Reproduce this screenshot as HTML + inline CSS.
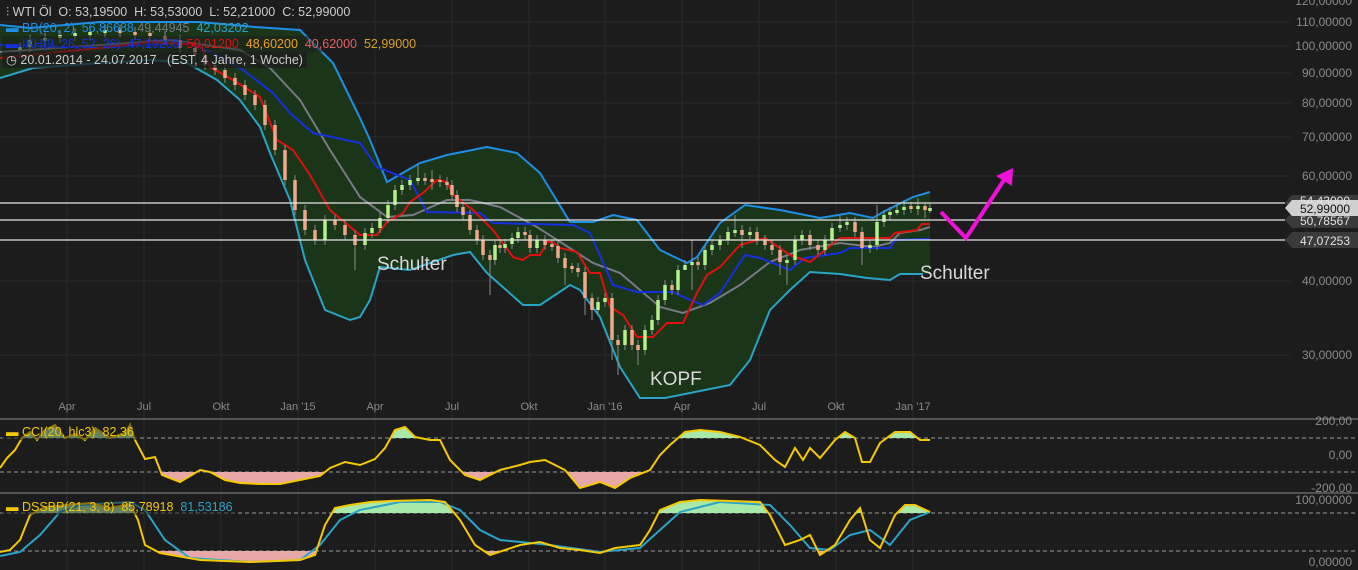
<!DOCTYPE html><html><head><meta charset="utf-8"><style>
html,body{margin:0;padding:0;background:#1c1c1c;width:1358px;height:570px;overflow:hidden;font-family:"Liberation Sans",sans-serif}
svg{position:absolute;left:0;top:0}
.lg{position:absolute;font-size:12.5px;white-space:nowrap;background:rgba(28,28,28,.75);padding:0 4px;line-height:16px}
</style></head><body>
<svg width="1358" height="570" xmlns="http://www.w3.org/2000/svg" font-family="Liberation Sans, sans-serif">
<defs>
<clipPath id="cgA"><rect x="0" y="419" width="1290" height="19"/></clipPath>
<clipPath id="cgB"><rect x="0" y="472" width="1290" height="21"/></clipPath>
<clipPath id="dgA"><rect x="0" y="494" width="1290" height="19"/></clipPath>
<clipPath id="dgB"><rect x="0" y="551" width="1290" height="19"/></clipPath>
</defs>
<g stroke="#2a2a2a" stroke-width="1">
<line x1="67" y1="0" x2="67" y2="570"/><line x1="144" y1="0" x2="144" y2="570"/><line x1="221" y1="0" x2="221" y2="570"/><line x1="298" y1="0" x2="298" y2="570"/><line x1="375" y1="0" x2="375" y2="570"/><line x1="452" y1="0" x2="452" y2="570"/><line x1="529" y1="0" x2="529" y2="570"/><line x1="605" y1="0" x2="605" y2="570"/><line x1="682" y1="0" x2="682" y2="570"/><line x1="759" y1="0" x2="759" y2="570"/><line x1="836" y1="0" x2="836" y2="570"/><line x1="913" y1="0" x2="913" y2="570"/>
<line x1="0" y1="22" x2="1290" y2="22"/><line x1="0" y1="46" x2="1290" y2="46"/><line x1="0" y1="73" x2="1290" y2="73"/><line x1="0" y1="103" x2="1290" y2="103"/><line x1="0" y1="137" x2="1290" y2="137"/><line x1="0" y1="176" x2="1290" y2="176"/><line x1="0" y1="281" x2="1290" y2="281"/><line x1="0" y1="355" x2="1290" y2="355"/>
</g>
<polygon fill="#1b3519" points="0,25 30,28 100,22 200,22 255,27 300,30 333,63 360,118 370,140 387,182 420,163 447,155 487,147 517,153 540,173 570,222 593,222 613,215 637,220 660,250 687,263 697,257 720,223 745,205 780,210 820,218 850,213 873,218 883,212 913,197 930,192 930,274 923,274 900,274 890,280 867,278 840,274 810,272 790,290 770,310 750,360 730,385 695,392 665,398 655,398 640,398 620,367 600,317 580,290 570,285 540,305 523,305 487,273 470,252 453,255 410,270 380,267 370,300 360,317 350,320 325,310 305,260 290,200 270,153 260,127 240,100 217,80 187,63 150,60 100,63 33,68 0,78"/>
<polyline fill="none" stroke="#1e8fe6" stroke-width="2" points="0,25 30,28 100,22 200,22 255,27 300,30 333,63 360,118 370,140 387,182 420,163 447,155 487,147 517,153 540,173 570,222 593,222 613,215 637,220 660,250 687,263 697,257 720,223 745,205 780,210 820,218 850,213 873,218 883,212 913,197 930,192"/>
<polyline fill="none" stroke="#2aa3c9" stroke-width="2" points="0,78 33,68 100,63 150,60 187,63 217,80 240,100 260,127 270,153 290,200 305,260 325,310 350,320 360,317 370,300 380,267 410,270 453,255 470,252 487,273 523,305 540,305 570,285 580,290 600,317 620,367 640,398 655,398 665,398 695,392 730,385 750,360 770,310 790,290 810,272 840,274 867,278 890,280 900,274 923,274"/>
<polyline fill="none" stroke="#777a85" stroke-width="2" points="0,52 100,45 170,40 240,50 270,68 300,100 330,150 360,197 387,217 413,215 447,200 470,200 500,207 537,227 593,263 620,273 660,307 683,313 710,303 740,285 770,262 800,250 840,243 873,247 890,243 900,233 920,230 930,227"/>
<polyline fill="none" stroke="#1530e0" stroke-width="2" points="0,45 100,48 187,43 213,53 243,70 273,93 290,113 313,133 360,143 377,167 410,180 427,212 480,213 493,223 573,225 590,233 613,285 637,292 673,292 690,300 703,305 720,293 745,255 760,258 790,270 805,258 840,253 850,248 890,248 895,240 930,239"/>
<polyline fill="none" stroke="#e01010" stroke-width="2" points="0,58 100,48 150,42 200,45 210,67 233,80 260,97 277,140 293,150 310,175 330,210 360,235 377,235 387,222 403,213 410,202 423,193 437,180 447,182 453,195 473,210 493,230 513,257 523,260 530,255 540,255 547,242 553,242 560,248 577,252 590,273 600,273 610,307 623,315 637,337 653,337 667,323 683,323 697,293 707,275 720,267 740,245 765,238 790,255 810,262 840,238 890,238 895,233 917,230 922,224 930,224"/>
<path fill="none" stroke="#8a8a8a" stroke-width="1" d="M20 42V55M30 35V52M45 33V46M60 30V43M75 28V41M90 27V40M105 25V38M120 25V38M135 27V40M150 28V41M165 31V45M180 35V53M195 43V60M205 50V70M215 60V75M225 65V83M235 73V90M245 80V100M255 90V110M265 100V130M275 120V155M285 145V185M295 175V215M305 205V235M315 225V245M325 215V245M335 215V230M345 220V240M355 230V270M365 228V250M372 223V238M380 213V233M388 200V223M395 185V210M402 180V195M410 175V190M418 165V185M425 173V185M432 170V190M440 175V187M447 177V190M452 180V200M457 190V212M463 202V220M470 210V235M477 225V245M483 235V260M490 250V295M495 240V265M500 240V253M505 239V253M512 233V249M518 227V243M525 227V240M530 230V253M537 235V253M545 235V250M552 240V251M558 241V263M565 253V285M572 263V273M578 263V277M585 267V315M592 293V320M598 297V315M605 293V307M612 293V360M618 335V375M625 325V350M632 325V350M638 340V365M645 325V355M652 315V335M658 295V325M665 280V305M672 280V295M678 265V295M685 260V270M692 240V290M698 257V270M705 245V270M712 240V255M720 235V250M728 227V245M735 215V237M742 225V248M750 227V240M757 227V245M765 235V250M772 240V255M780 245V275M787 255V285M795 235V265M802 230V245M810 230V250M818 240V255M825 235V255M832 223V245M840 215V232M847 217V230M855 217V237M862 227V265M870 240V253M877 205V250M884 210V227M890 207V220M897 205V215M904 200V215M911 202V213M918 198V215M925 203V218M930 203V213"/>
<path fill="none" stroke="#b4f08c" stroke-width="3.5" d="M20 47V50M30 40V47M45 38V41M60 35V38M75 33V36M90 32V35M105 30V33M325 220V240M365 233V245M372 228V233M380 218V228M388 205V218M395 190V205M402 185V190M410 180V185M418 178V181M495 245V260M505 244V248M512 238V244M518 232V238M537 240V248M598 302V310M605 298V302M625 330V345M645 330V350M652 320V330M658 300V320M665 285V300M678 270V290M685 265V270M692 262V265M705 250V265M712 245V250M720 240V245M728 232V240M735 230V233M750 232V235M787 260V263M795 240V260M802 235V240M825 240V250M832 228V240M840 225V228M847 222V225M870 245V248M877 222V245M884 215V222M890 212V215M897 210V213M904 207V210M918 206V209M930 208V211"/>
<path fill="none" stroke="#f0a88c" stroke-width="3.5" d="M120 30V33M135 32V35M150 33V36M165 36V40M180 40V48M195 48V55M205 55V65M215 65V70M225 70V78M235 78V85M245 85V95M255 95V105M265 105V125M275 125V150M285 150V180M295 180V210M305 210V230M315 230V240M335 220V225M345 225V235M355 235V245M425 178V181M432 179V182M440 180V182M447 182V185M452 185V195M457 195V207M463 207V215M470 215V230M477 230V240M483 240V255M490 255V260M500 245V248M525 232V235M530 235V248M545 240V245M552 244V247M558 246V258M565 258V268M572 266V269M578 268V272M585 272V298M592 298V310M612 298V340M618 340V345M632 330V345M638 345V350M672 285V290M698 262V265M742 230V235M757 232V240M765 240V245M772 245V250M780 250V262M810 235V245M818 245V250M855 222V232M862 232V248M911 206V209M925 206V210"/>
<g stroke="#e6e6e6" stroke-width="1.3">
<line x1="0" y1="203" x2="1285" y2="203"/><line x1="0" y1="220" x2="1285" y2="220"/><line x1="0" y1="240" x2="1285" y2="240"/>
</g>
<polyline fill="none" stroke="#f010d8" stroke-width="4" points="941,212 966,238 1004,180"/>
<polygon fill="#f010d8" points="1013,168 1012,186 996,176"/>
<g fill="#d8d8d8" font-size="19">
<text x="377" y="270">Schulter</text><text x="650" y="385">KOPF</text><text x="920" y="279">Schulter</text>
</g>
<g fill="#8a8a8a" font-size="11" text-anchor="middle">
<text x="67" y="410">Apr</text><text x="144" y="410">Jul</text><text x="221" y="410">Okt</text><text x="298" y="410">Jan '15</text><text x="375" y="410">Apr</text><text x="452" y="410">Jul</text><text x="529" y="410">Okt</text><text x="605" y="410">Jan '16</text><text x="682" y="410">Apr</text><text x="759" y="410">Jul</text><text x="836" y="410">Okt</text><text x="913" y="410">Jan '17</text>
</g>
<g fill="#8a8a8a" font-size="12" text-anchor="end">
<text x="1352" y="5">120,00000</text><text x="1352" y="26">110,00000</text><text x="1352" y="50">100,00000</text><text x="1352" y="77">90,00000</text><text x="1352" y="107">80,00000</text><text x="1352" y="141">70,00000</text><text x="1352" y="180">60,00000</text><text x="1352" y="285">40,00000</text><text x="1352" y="359">30,00000</text>
<text x="1352" y="425">200,00</text><text x="1352" y="459">0,00</text><text x="1352" y="492">-200,00</text><text x="1352" y="504">100,00000</text><text x="1352" y="566">0,00000</text>
</g>
<polygon fill="#3a3a3a" points="1285,203 1292,195 1358,195 1358,211 1292,211"/>
<polygon fill="#3a3a3a" points="1285,220 1292,212 1358,212 1358,228 1292,228"/>
<polygon fill="#3a3a3a" points="1285,240 1292,232 1358,232 1358,248 1292,248"/>
<polygon fill="#d0d0d0" points="1285,208 1292,200 1358,200 1358,216 1292,216"/>
<g font-size="12" text-anchor="end">
<text x="1350" y="205" fill="#e0e0e0">54,43000</text><text x="1350" y="225" fill="#e0e0e0">50,78567</text><text x="1350" y="245" fill="#e0e0e0">47,07253</text><text x="1350" y="213" fill="#111">52,99000</text>
</g>
<line x1="0" y1="419" x2="1358" y2="419" stroke="#8a8a8a"/>
<line x1="0" y1="493" x2="1358" y2="493" stroke="#8a8a8a"/>
<g stroke="#9a9a9a" stroke-dasharray="4,3"><line x1="0" y1="438" x2="1358" y2="438"/><line x1="0" y1="472" x2="1358" y2="472"/><line x1="0" y1="513" x2="1358" y2="513"/><line x1="0" y1="551" x2="1358" y2="551"/></g>
<polygon clip-path="url(#cgA)" fill="#a8e8a8" points="0,468 7,458 15,450 22,438 30,432 37,440 45,430 55,425 65,438 75,434 85,440 95,428 110,438 125,433 130,425 135,440 145,459 155,457 162,475 180,482 200,470 210,472 225,480 240,483 260,484 280,484 300,480 320,476 330,468 345,462 360,465 375,459 385,448 395,430 405,427 415,437 430,440 440,440 450,460 465,475 480,480 500,470 520,465 530,462 545,460 555,465 565,470 580,488 600,482 615,488 630,478 650,470 660,455 670,445 685,432 700,430 720,432 740,437 760,445 775,460 785,467 795,448 803,460 810,448 820,458 835,440 845,432 855,438 862,462 870,462 880,443 895,432 910,432 920,440 930,440 930,438 0,438"/>
<polygon clip-path="url(#cgB)" fill="#e8a8a8" points="0,468 7,458 15,450 22,438 30,432 37,440 45,430 55,425 65,438 75,434 85,440 95,428 110,438 125,433 130,425 135,440 145,459 155,457 162,475 180,482 200,470 210,472 225,480 240,483 260,484 280,484 300,480 320,476 330,468 345,462 360,465 375,459 385,448 395,430 405,427 415,437 430,440 440,440 450,460 465,475 480,480 500,470 520,465 530,462 545,460 555,465 565,470 580,488 600,482 615,488 630,478 650,470 660,455 670,445 685,432 700,430 720,432 740,437 760,445 775,460 785,467 795,448 803,460 810,448 820,458 835,440 845,432 855,438 862,462 870,462 880,443 895,432 910,432 920,440 930,440 930,472 0,472"/>
<polyline fill="none" stroke="#f5c800" stroke-width="2" points="0,468 7,458 15,450 22,438 30,432 37,440 45,430 55,425 65,438 75,434 85,440 95,428 110,438 125,433 130,425 135,440 145,459 155,457 162,475 180,482 200,470 210,472 225,480 240,483 260,484 280,484 300,480 320,476 330,468 345,462 360,465 375,459 385,448 395,430 405,427 415,437 430,440 440,440 450,460 465,475 480,480 500,470 520,465 530,462 545,460 555,465 565,470 580,488 600,482 615,488 630,478 650,470 660,455 670,445 685,432 700,430 720,432 740,437 760,445 775,460 785,467 795,448 803,460 810,448 820,458 835,440 845,432 855,438 862,462 870,462 880,443 895,432 910,432 920,440 930,440"/>
<polygon clip-path="url(#dgA)" fill="#a8e8a8" points="0,552 10,550 20,540 30,515 45,507 90,503 110,508 130,504 138,520 145,545 160,553 200,560 250,562 300,560 315,555 325,525 335,508 350,505 370,502 390,501 430,500 445,502 460,520 475,545 490,555 520,545 540,542 560,548 580,550 600,553 615,548 640,545 650,530 660,510 680,502 700,500 760,502 770,515 785,545 800,540 810,535 820,555 835,545 850,520 860,508 870,540 880,548 895,515 905,505 915,505 930,512 930,513 0,513"/>
<polygon clip-path="url(#dgB)" fill="#e8a8a8" points="0,552 10,550 20,540 30,515 45,507 90,503 110,508 130,504 138,520 145,545 160,553 200,560 250,562 300,560 315,555 325,525 335,508 350,505 370,502 390,501 430,500 445,502 460,520 475,545 490,555 520,545 540,542 560,548 580,550 600,553 615,548 640,545 650,530 660,510 680,502 700,500 760,502 770,515 785,545 800,540 810,535 820,555 835,545 850,520 860,508 870,540 880,548 895,515 905,505 915,505 930,512 930,551 0,551"/>
<polyline fill="none" stroke="#2aa3c9" stroke-width="2" points="0,556 20,552 40,535 60,512 80,505 130,502 145,510 165,540 190,558 250,562 300,560 320,545 340,520 360,510 400,502 440,502 460,510 480,530 500,540 550,545 600,552 640,548 660,530 680,512 720,502 770,505 790,525 810,548 830,550 850,535 870,530 890,545 910,520 930,512"/>
<polyline fill="none" stroke="#f5c800" stroke-width="2" points="0,552 10,550 20,540 30,515 45,507 90,503 110,508 130,504 138,520 145,545 160,553 200,560 250,562 300,560 315,555 325,525 335,508 350,505 370,502 390,501 430,500 445,502 460,520 475,545 490,555 520,545 540,542 560,548 580,550 600,553 615,548 640,545 650,530 660,510 680,502 700,500 760,502 770,515 785,545 800,540 810,535 820,555 835,545 850,520 860,508 870,540 880,548 895,515 905,505 915,505 930,512"/>
</svg>
<div class="lg" style="left:2px;top:4px;color:#ccc">⫶ WTI Öl&nbsp; O: 53,19500&nbsp; H: 53,53000&nbsp; L: 52,21000&nbsp; C: 52,99000</div>
<div class="lg" style="left:2px;top:20px;background:none"><span style="color:#1e8fe6">▬ BB(20, 2)&nbsp; 56,86688</span> <span style="color:#777a85">49,44945</span>&nbsp; <span style="color:#2aa3c9">42,03202</span></div>
<div class="lg" style="left:2px;top:36px;background:rgba(28,28,28,.5)"><span style="color:#1530e0">▬ IKH(9, 26, 52, 26)&nbsp; 47,19200</span>&nbsp; <span style="color:#e01010">50,01200</span>&nbsp; <span style="color:#f0a020">48,60200</span>&nbsp; <span style="color:#e06060">40,62000</span>&nbsp; <span style="color:#d8a020">52,99000</span></div>
<div class="lg" style="left:2px;top:52px;color:#ccc">◷ 20.01.2014 - 24.07.2017&nbsp;&nbsp; (EST, 4 Jahre, 1 Woche)</div>
<div class="lg" style="left:2px;top:424px;color:#f5c800;background:rgba(28,28,28,.5)">▬ CCI(20, hlc3)&nbsp; 82,36</div>
<div class="lg" style="left:2px;top:499px;background:rgba(28,28,28,.5)"><span style="color:#f5c800">▬ DSSBP(21, 3, 8)&nbsp; 85,78918</span>&nbsp; <span style="color:#2aa3c9">81,53186</span></div>
</body></html>
